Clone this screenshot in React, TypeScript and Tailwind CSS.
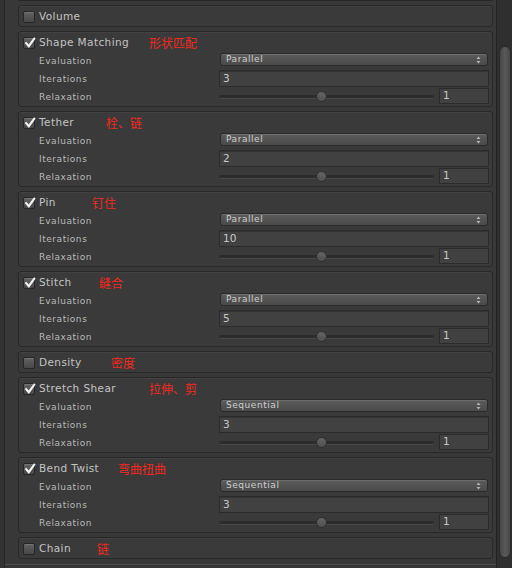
import React from "react";

type Item = {
  title: string;
  zh: string;
  zhCls: string;
  open: boolean;
  checked: boolean;
  evalText?: string;
  iter?: string;
};

const items: Item[] = [
  { title: "Volume", zh: "", zhCls: "", open: false, checked: false },
  { title: "Shape Matching", zh: "形状匹配", zhCls: "left-[126px]", open: true, checked: true, evalText: "Parallel", iter: "3" },
  { title: "Tether", zh: "栓、链", zhCls: "left-[83px]", open: true, checked: true, evalText: "Parallel", iter: "2" },
  { title: "Pin", zh: "钉住", zhCls: "left-[69px]", open: true, checked: true, evalText: "Parallel", iter: "10" },
  { title: "Stitch", zh: "缝合", zhCls: "left-[76px]", open: true, checked: true, evalText: "Parallel", iter: "5" },
  { title: "Density", zh: "密度", zhCls: "left-[88px]", open: false, checked: false },
  { title: "Stretch Shear", zh: "拉伸、剪", zhCls: "left-[126px]", open: true, checked: true, evalText: "Sequential", iter: "3" },
  { title: "Bend Twist", zh: "弯曲扭曲", zhCls: "left-[95px]", open: true, checked: true, evalText: "Sequential", iter: "3" },
  { title: "Chain", zh: "链", zhCls: "left-[74px]", open: false, checked: false },
];

const font = "font-['DejaVu_Sans',sans-serif]";

function Checkbox({ checked }: { checked: boolean }) {
  return (
    <div className="relative w-[12px] h-[12px] rounded-[2px] border border-[#262626] bg-gradient-to-b from-[#626262] to-[#484848] shadow-[inset_0_1px_0_rgba(255,255,255,0.12)]">
      {checked && (
        <svg className="absolute left-[0px] top-[-1px]" width="12" height="12" viewBox="0 0 12 12">
          <path d="M2.2 6.2 L4.8 9.2 L10.2 1.8" fill="none" stroke="#f4f4f4" strokeWidth="2.1" strokeLinecap="square" />
        </svg>
      )}
    </div>
  );
}

function Row({ label, children }: { label: string; children: React.ReactNode }) {
  return (
    <div className="flex h-[18px] pl-[16px]">
      <div className="w-[180px] flex items-center pt-[2px] text-[9px] tracking-[0.55px] text-[#b9b9b9]">{label}</div>
      <div className="flex-1 flex">{children}</div>
    </div>
  );
}

function Box({ item }: { item: Item }) {
  return (
    <div className="relative border border-[#282828] rounded-[3px] bg-[#3a3a3a] pl-[4px] pr-[3px] shadow-[inset_0_1px_0_rgba(255,255,255,0.04)]">
      <div className="pt-[2px]">
        <div className="relative flex items-center h-[18px]">
          <Checkbox checked={item.checked} />
          <span className="ml-[4px] text-[10.5px] tracking-[0.4px] text-[#c4c4c4]">{item.title}</span>
          {item.zh && (
            <span
              className={`absolute top-[1px] ${item.zhCls} text-[12px] leading-[16px] text-[#f2291f] font-['Noto_Sans_CJK_SC',sans-serif]`}
            >
              {item.zh}
            </span>
          )}
        </div>
      </div>
      {item.open && (
        <div>
          <Row label="Evaluation">
            <div className="mt-[1px] ml-[1px] mr-[1px] flex-1 h-[13px] rounded-[3px] border border-[#2a2a2a] bg-gradient-to-b from-[#5c5c5c] to-[#4a4a4a] shadow-[inset_0_1px_0_rgba(255,255,255,0.12)] flex items-center justify-between pl-[5px] pr-[6px]">
              <span className="text-[9px] tracking-[0.55px] text-[#cfcfcf] leading-none">{item.evalText}</span>
              <svg width="5" height="8" viewBox="0 0 5 8">
                <path d="M2.5 0.5 L4.5 3 L0.5 3 Z" fill="#b8b8b8" />
                <path d="M2.5 7.5 L4.5 5 L0.5 5 Z" fill="#b8b8b8" />
              </svg>
            </div>
          </Row>
          <Row label="Iterations">
            <div className="flex-1 h-[17px] border border-[#2b2b2b] bg-[#414141] shadow-[inset_0_1px_0_rgba(0,0,0,0.2)] flex items-center pl-[3px] text-[10.5px] text-[#c8c8c8]">
              {item.iter}
            </div>
          </Row>
          <Row label="Relaxation">
            <div className="relative w-[215px] h-[17px] flex items-center">
              <div className="w-full h-[4px] rounded-full bg-[#2c2c2c] border-b border-[#4a4a4a]"></div>
              <div className="absolute left-[97px] top-[3px] w-[11px] h-[11px] rounded-full border border-[#2e2e2e] bg-gradient-to-b from-[#636363] to-[#505050]"></div>
            </div>
            <div className="ml-[5px] w-[50px] h-[16px] border border-[#2b2b2b] bg-[#414141] flex items-center pl-[3px] text-[10.5px] text-[#c8c8c8]">
              1
            </div>
          </Row>
        </div>
      )}
    </div>
  );
}

export default function App() {
  return (
    <div className={`w-[512px] h-[568px] overflow-hidden flex bg-[#383838] ${font}`}>
      <div className="w-[4px] bg-[#333333] border-r border-[#262626] box-content"></div>
      <div className="flex-1 flex flex-col pl-[13px] pr-[3px]">
        <div className="h-[1px] mt-[-1px] border-x border-b border-[#282828] rounded-b-[3px] bg-[#3a3a3a] box-content"></div>
        <div className="flex flex-col gap-[4px] mt-[4px]">
          {items.map((it) => (
            <Box key={it.title} item={it} />
          ))}
        </div>
        <div className="mt-[5px] ml-[-13px] mr-[-3px] h-[1px] bg-[#4c4c4c]"></div>
        <div className="ml-[-13px] mr-[-3px] flex-1 bg-[#363636]"></div>
      </div>
      <div className="w-[16px] bg-[#2f2f2f] border-l border-[#222222] flex flex-col items-center pt-[46px]">
        <div className="w-[12px] h-[512px] ml-[1px] rounded-[6px] bg-gradient-to-r from-[#444444] via-[#5a5a5a] to-[#474747] border border-[#2a2a2a]"></div>
      </div>
    </div>
  );
}
